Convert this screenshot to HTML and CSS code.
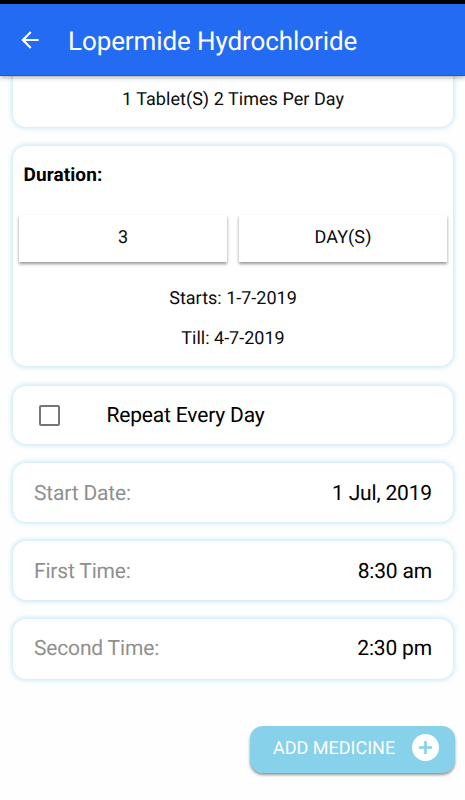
FILE: index.html
```html
<!DOCTYPE html>
<html lang="en">
<head>
<meta charset="utf-8">
<title>Lopermide Hydrochloride</title>
<link rel="stylesheet" href="styles.css">
</head>
<body>
<div class="screen">
  <header class="appbar">
    <svg class="back" viewBox="0 0 24 24" width="26" height="26"><path fill="#fff" d="M20 11H7.83l5.59-5.59L12 4l-8 8 8 8 1.41-1.41L7.83 13H20v-2z"/></svg>
    <h1 class="title">Lopermide Hydrochloride</h1>
  </header>
  <main class="content">
    <section class="card dosage">1 Tablet(S) 2 Times Per Day</section>
    <section class="card duration">
      <h2 class="heading">Duration:</h2>
      <div class="buttons">
        <button class="pick">3</button>
        <button class="pick">DAY(S)</button>
      </div>
      <p class="date">Starts: 1-7-2019</p>
      <p class="date">Till: 4-7-2019</p>
    </section>
    <label class="card row repeat"><span class="box"></span><span class="text">Repeat Every Day</span></label>
    <section class="card row field"><span class="text label">Start Date:</span><span class="text">1 Jul, 2019</span></section>
    <section class="card row field"><span class="text label">First Time:</span><span class="text">8:30 am</span></section>
    <section class="card row field last"><span class="label">Second Time:</span><span>2:30 pm</span></section>
    <button class="add"><span class="add-text">ADD MEDICINE</span>
      <svg viewBox="0 0 27 27" width="27" height="27"><circle cx="13.5" cy="13.5" r="13.5" fill="#fff"/><path d="M13.5 6.9v13.2M6.9 13.5h13.2" stroke="#87d1ea" stroke-width="2.6"/></svg>
    </button>
  </main>
</div>
</body>
</html>
```

FILE: styles.css
```css
* { box-sizing: border-box; }
body { margin: 0; background: #fefefe; font-family: Roboto, "Liberation Sans", sans-serif; color: #0c0c0c; text-rendering: geometricPrecision; }
.screen { height: 800px; overflow: hidden; display: flex; flex-direction: column; }
.appbar {
  position: relative;
  z-index: 1;
  flex: none;
  height: 76px;
  border-top: 4px solid #000;
  border-bottom: 1px solid #1159e6;
  background: #246bf4;
  box-shadow: 0 1px 5px rgba(0, 0, 0, .4);
  display: flex;
  align-items: center;
  padding-left: 17px;
}
.back { flex: none; margin-right: 25px; }
.title { margin: 4px 0 0; font-size: 26px; font-weight: 400; line-height: 32px; letter-spacing: -.1px; color: #fff; white-space: nowrap; }
.content { display: flex; flex-direction: column; padding: 0 12px 0 13px; }
.card {
  flex: none;
  background: #fff;
  border-radius: 13px;
  box-shadow: 0 0 5px 1px rgba(135, 206, 235, .52);
  margin-bottom: 19px;
}
.dosage { height: 67px; margin-top: -16px; padding-top: 29px; text-align: center; font-size: 18px; line-height: 22px; letter-spacing: .04px; }
.duration { height: 220px; padding: 18px 6px 0; margin-bottom: 20px; }
.heading { margin: 0 0 29px 4.5px; font-size: 19px; line-height: 22px; font-weight: 700; letter-spacing: .1px; color: #000; }
.buttons { display: flex; gap: 12px; margin-bottom: 26px; }
.pick {
  flex: 1;
  height: 47px;
  border: 0;
  padding: 0 0 2px;
  background: #fff;
  color: #0c0c0c;
  font: 400 18px/45px Roboto, "Liberation Sans", sans-serif;
  text-rendering: inherit;
  letter-spacing: .1px;
  box-shadow: 0 2px 3px rgba(0, 0, 0, .42);
}
.date { margin: 0 0 18px; text-align: center; font-size: 18px; line-height: 22px; }
.row { display: flex; align-items: center; height: 59px; font-size: 21px; line-height: 25px; letter-spacing: -.17px; }
.repeat { height: 58px; padding-top: 1px; color: #000; }
.box { width: 21px; height: 21px; border: 2px solid #757575; border-radius: 2px; margin: 0 46.5px 0 26px; }
.text { padding-top: 1px; }
.field { justify-content: space-between; padding: 2px 21px 0; color: #000; }
.label { color: #8f8f8f; }
.last { height: 60px; margin-bottom: 47px; padding-top: 0; }
.add {
  align-self: flex-end;
  width: 205px;
  height: 47px;
  margin-right: -2px;
  border: 0;
  border-radius: 13px;
  padding: 0 16px 4px 23px;
  display: flex;
  align-items: center;
  justify-content: space-between;
  background: #87d1ea;
  color: #fff;
  font: 400 18px/22px Roboto, "Liberation Sans", sans-serif;
  text-rendering: inherit;
  box-shadow: 0 2px 3px rgba(0, 0, 0, .42);
}
.add-text { padding-top: 3px; }
```
